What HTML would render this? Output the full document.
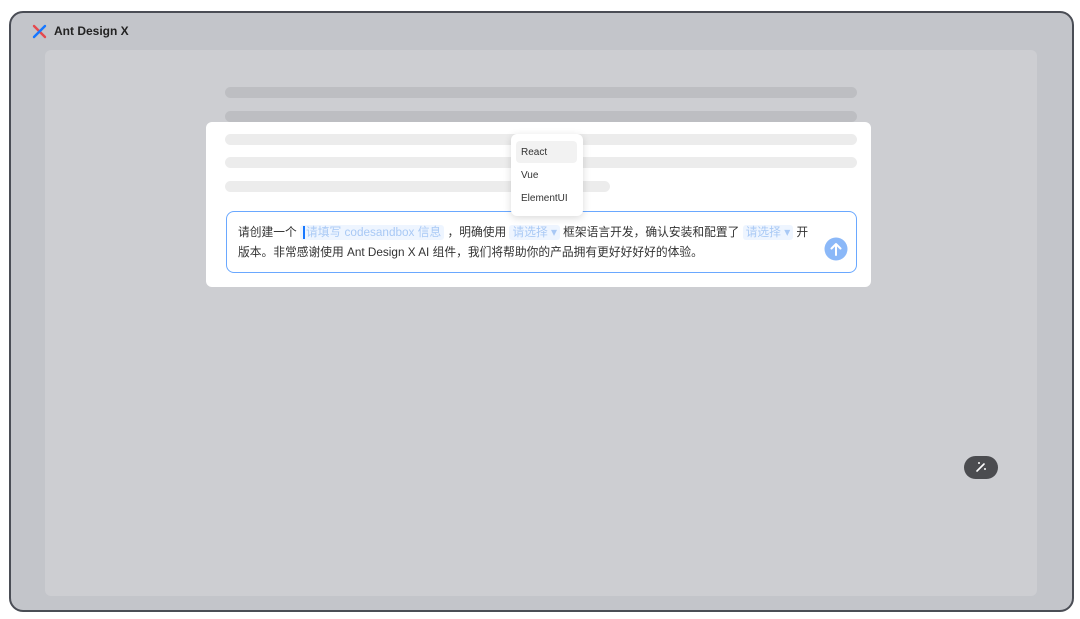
<!DOCTYPE html>
<html><head><meta charset="utf-8"><style>
*{margin:0;padding:0;box-sizing:border-box}
body{width:1080px;height:619px;background:#fff;position:relative;overflow:hidden;font-family:"Liberation Sans","Noto Sans CJK SC",sans-serif}
.frame{position:absolute;left:9px;top:11px;width:1065px;height:601px;border:2px solid #4a4d55;border-radius:14px;background:#c3c5ca}
.panel{position:absolute;left:45px;top:50px;width:992px;height:546px;background:#cdced2;border-radius:6px}
.bar{position:absolute;height:11px;border-radius:6px}
.card{position:absolute;left:206px;top:122px;width:665px;height:165px;background:#fff;border-radius:6px}
.input{position:absolute;left:226px;top:211px;width:631px;height:62px;border:1.5px solid #6aa8ff;border-radius:8px;background:#fff;font-size:11.75px;color:#333;line-height:20px;padding:11px 40px 0 11px;white-space:nowrap}
.slot{background:#eef5ff;color:#a9c9f5;border-radius:3px;padding:1px 3px}
.dd{position:absolute;left:511px;top:134px;width:72px;height:82px;background:#fff;border-radius:6px;box-shadow:0 2px 8px rgba(0,0,0,.15);font-size:10px;color:#333}
.dd div{position:absolute;left:10px}
</style></head><body>
<div class="frame"></div>
<svg style="position:absolute;left:32px;top:24px" width="15" height="15" viewBox="0 0 15 15"><path d="M2 2L13 13" stroke="#e5494d" stroke-width="2.4" stroke-linecap="round"/><path d="M13 2L2 13" stroke="#1677ff" stroke-width="2.4" stroke-linecap="round"/></svg>
<div style="position:absolute;left:54px;top:24px;font-size:12px;font-weight:bold;color:#222">Ant Design X</div>
<div class="panel"></div>
<div class="bar" style="left:225px;top:87px;width:632px;background:#bdbec2"></div>
<div class="bar" style="left:225px;top:111px;width:632px;background:#bdbec2"></div>
<div class="card"></div>
<div class="bar" style="left:225px;top:134px;width:632px;background:#ececec"></div>
<div class="bar" style="left:225px;top:157px;width:632px;background:#ececec"></div>
<div class="bar" style="left:225px;top:181px;width:385px;background:#ececec"></div>
<div class="input">请创建一个 <span class="slot"><span style="border-left:2px solid #1677ff;margin-right:1px"></span>请填写 codesandbox 信息</span> ，明确使用 <span class="slot">请选择 ▾</span> 框架语言开发，确认安装和配置了 <span class="slot">请选择 ▾</span> 开<br>版本。非常感谢使用 Ant Design X AI 组件，我们将帮助你的产品拥有更好好好好的体验。</div>
<svg style="position:absolute;left:824px;top:237px" width="24" height="24" viewBox="0 0 24 24"><circle cx="12" cy="12" r="11.5" fill="#8bb8f8"/><path d="M12 18V7M7.5 11.5L12 7l4.5 4.5" stroke="#fff" stroke-width="2" fill="none" stroke-linecap="round" stroke-linejoin="round"/></svg>
<div class="dd">
<div style="left:5px;top:7px;width:61px;height:22px;background:#f2f2f2;border-radius:4px"></div>
<div style="top:13px">React</div><div style="top:36px">Vue</div><div style="top:59px">ElementUI</div>
</div>
<div style="position:absolute;left:964px;top:456px;width:34px;height:23px;border-radius:12px;background:#4b4c50"></div>
<svg style="position:absolute;left:974px;top:460px" width="14" height="14" viewBox="0 0 14 14"><path d="M3 11L10 4" stroke="#fff" stroke-width="1.6" stroke-linecap="round"/><path d="M4 3h2M5 2v2M10 9h2M11 8v2" stroke="#fff" stroke-width="1"/></svg>
</body></html>
